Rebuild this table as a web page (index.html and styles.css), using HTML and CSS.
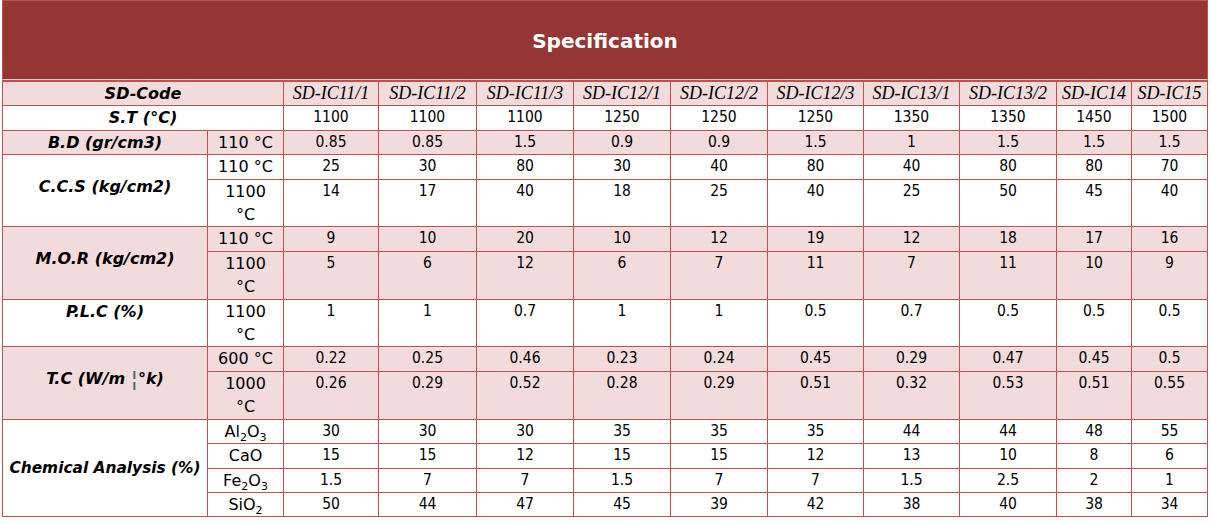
FILE: index.html
```html
<!DOCTYPE html>
<html lang="en">
<head>
    <meta charset="UTF-8">
    <title>Specification</title>
    <link rel="stylesheet" href="styles.css">
</head>
<body>
    <table class="spec">
        <caption class="spec-title">Specification</caption>
        <colgroup>
            <col class="col-label">
            <col class="col-sub">
            <col class="col-95">
            <col class="col-98">
            <col class="col-97">
            <col class="col-97">
            <col class="col-97">
            <col class="col-96">
            <col class="col-96">
            <col class="col-97">
            <col class="col-75">
            <col class="col-76">
        </colgroup>
        <tbody>
            <tr class="row-pink row-first">
                <th colspan="2" class="label">SD-Code</th>
                <td class="code">SD-IC11/1</td>
                <td class="code">SD-IC11/2</td>
                <td class="code">SD-IC11/3</td>
                <td class="code">SD-IC12/1</td>
                <td class="code">SD-IC12/2</td>
                <td class="code">SD-IC12/3</td>
                <td class="code">SD-IC13/1</td>
                <td class="code">SD-IC13/2</td>
                <td class="code">SD-IC14</td>
                <td class="code">SD-IC15</td>
            </tr>
            <tr>
                <th colspan="2" class="label">S.T (°C)</th>
                <td>1100</td><td>1100</td><td>1100</td><td>1250</td><td>1250</td>
                <td>1250</td><td>1350</td><td>1350</td><td>1450</td><td>1500</td>
            </tr>
            <tr class="row-pink">
                <th class="label">B.D (gr/cm3)</th>
                <td class="sub-label">110 °C</td>
                <td>0.85</td><td>0.85</td><td>1.5</td><td>0.9</td><td>0.9</td>
                <td>1.5</td><td>1</td><td>1.5</td><td>1.5</td><td>1.5</td>
            </tr>

            <tr>
                <th rowspan="2" class="label lift">C.C.S (kg/cm2)</th>
                <td class="sub-label">110 °C</td>
                <td>25</td><td>30</td><td>80</td><td>30</td><td>40</td>
                <td>80</td><td>40</td><td>80</td><td>80</td><td>70</td>
            </tr>
            <tr>
                <td class="sub-label">1100<br>°C</td>
                <td>14</td><td>17</td><td>40</td><td>18</td><td>25</td>
                <td>40</td><td>25</td><td>50</td><td>45</td><td>40</td>
            </tr>

            <tr class="row-pink">
                <th rowspan="2" class="label lift">M.O.R (kg/cm2)</th>
                <td class="sub-label">110 °C</td>
                <td>9</td><td>10</td><td>20</td><td>10</td><td>12</td>
                <td>19</td><td>12</td><td>18</td><td>17</td><td>16</td>
            </tr>
            <tr class="row-pink">
                <td class="sub-label">1100<br>°C</td>
                <td>5</td><td>6</td><td>12</td><td>6</td><td>7</td>
                <td>11</td><td>7</td><td>11</td><td>10</td><td>9</td>
            </tr>

            <tr>
                <th class="label top">P.L.C (%)</th>
                <td class="sub-label">1100<br>°C</td>
                <td>1</td><td>1</td><td>0.7</td><td>1</td><td>1</td>
                <td>0.5</td><td>0.7</td><td>0.5</td><td>0.5</td><td>0.5</td>
            </tr>

            <tr class="row-pink">
                <th rowspan="2" class="label lift">T.C (W/m <span class="stray">¦</span>°k)</th>
                <td class="sub-label">600 °C</td>
                <td>0.22</td><td>0.25</td><td>0.46</td><td>0.23</td><td>0.24</td>
                <td>0.45</td><td>0.29</td><td>0.47</td><td>0.45</td><td>0.5</td>
            </tr>
            <tr class="row-pink">
                <td class="sub-label">1000<br>°C</td>
                <td>0.26</td><td>0.29</td><td>0.52</td><td>0.28</td><td>0.29</td>
                <td>0.51</td><td>0.32</td><td>0.53</td><td>0.51</td><td>0.55</td>
            </tr>

            <tr>
                <th rowspan="4" class="label chem">Chemical Analysis (%)</th>
                <td class="sub-label">Al<sub>2</sub>O<sub>3</sub></td>
                <td>30</td><td>30</td><td>30</td><td>35</td><td>35</td>
                <td>35</td><td>44</td><td>44</td><td>48</td><td>55</td>
            </tr>
            <tr>
                <td class="sub-label">CaO</td>
                <td>15</td><td>15</td><td>12</td><td>15</td><td>15</td>
                <td>12</td><td>13</td><td>10</td><td>8</td><td>6</td>
            </tr>
            <tr>
                <td class="sub-label">Fe<sub>2</sub>O<sub>3</sub></td>
                <td>1.5</td><td>7</td><td>7</td><td>1.5</td><td>7</td>
                <td>7</td><td>1.5</td><td>2.5</td><td>2</td><td>1</td>
            </tr>
            <tr>
                <td class="sub-label">SiO<sub>2</sub></td>
                <td>50</td><td>44</td><td>47</td><td>45</td><td>39</td>
                <td>42</td><td>38</td><td>40</td><td>38</td><td>34</td>
            </tr>
        </tbody>
    </table>
</body>
</html>
```

FILE: styles.css
```css
*{
    box-sizing: border-box;
}
body{
    margin: 0;
    padding: 0 2px;
    background-color: #fff;
    color: #000;
    font-family: "DejaVu Sans Condensed", "DejaVu Sans", sans-serif;
}
.spec{
    width: 1206px;
    border-collapse: collapse;
    table-layout: fixed;
}
.spec-title{
    height: 80px;
    padding-top: 2px;
    line-height: 76px;
    background-color: #943634;
    color: #fff;
    font-family: "DejaVu Sans", sans-serif;
    font-size: 20px;
    font-weight: bold;
    border: 1px solid #c0504d;
    border-bottom-color: #ecd3d2;
}
.col-label{ width: 205px; }
.col-sub{ width: 76px; }
.col-95{ width: 95px; }
.col-96{ width: 96px; }
.col-97{ width: 97px; }
.col-98{ width: 98px; }
.col-75{ width: 75px; }
.col-76{ width: 76px; }

.spec td,
.spec th{
    border: 1px solid #c0504d;
    padding: 0 2px;
    line-height: 23.4px;
    font-size: 15.5px;
    font-weight: normal;
    text-align: center;
    vertical-align: top;
}
.row-first th,
.row-first td{
    border-top-width: 2px;
}
.row-pink{
    background-color: #f2dcdb;
}
.spec .label{
    font-family: "DejaVu Sans", sans-serif;
    font-size: 16px;
    font-weight: bold;
    font-style: italic;
    vertical-align: middle;
    white-space: nowrap;
}
.spec .label.lift{
    padding-bottom: 8px;
}
.spec .label.top{
    vertical-align: top;
}
.spec .label.chem{
    font-size: 15.4px;
    padding-top: 2px;
}
.spec .code{
    font-family: "Liberation Serif", serif;
    font-size: 18px;
    font-style: italic;
}
.spec .sub-label{
    font-family: "DejaVu Sans", sans-serif;
    font-size: 16px;
}
.sub-label sub{
    font-size: 11px;
    line-height: 0;
    vertical-align: -4px;
}
.stray{
    color: #2e6464;
    font-size: 21px;
    line-height: 0;
    font-style: normal;
    font-weight: normal;
    vertical-align: -2px;
}
```
